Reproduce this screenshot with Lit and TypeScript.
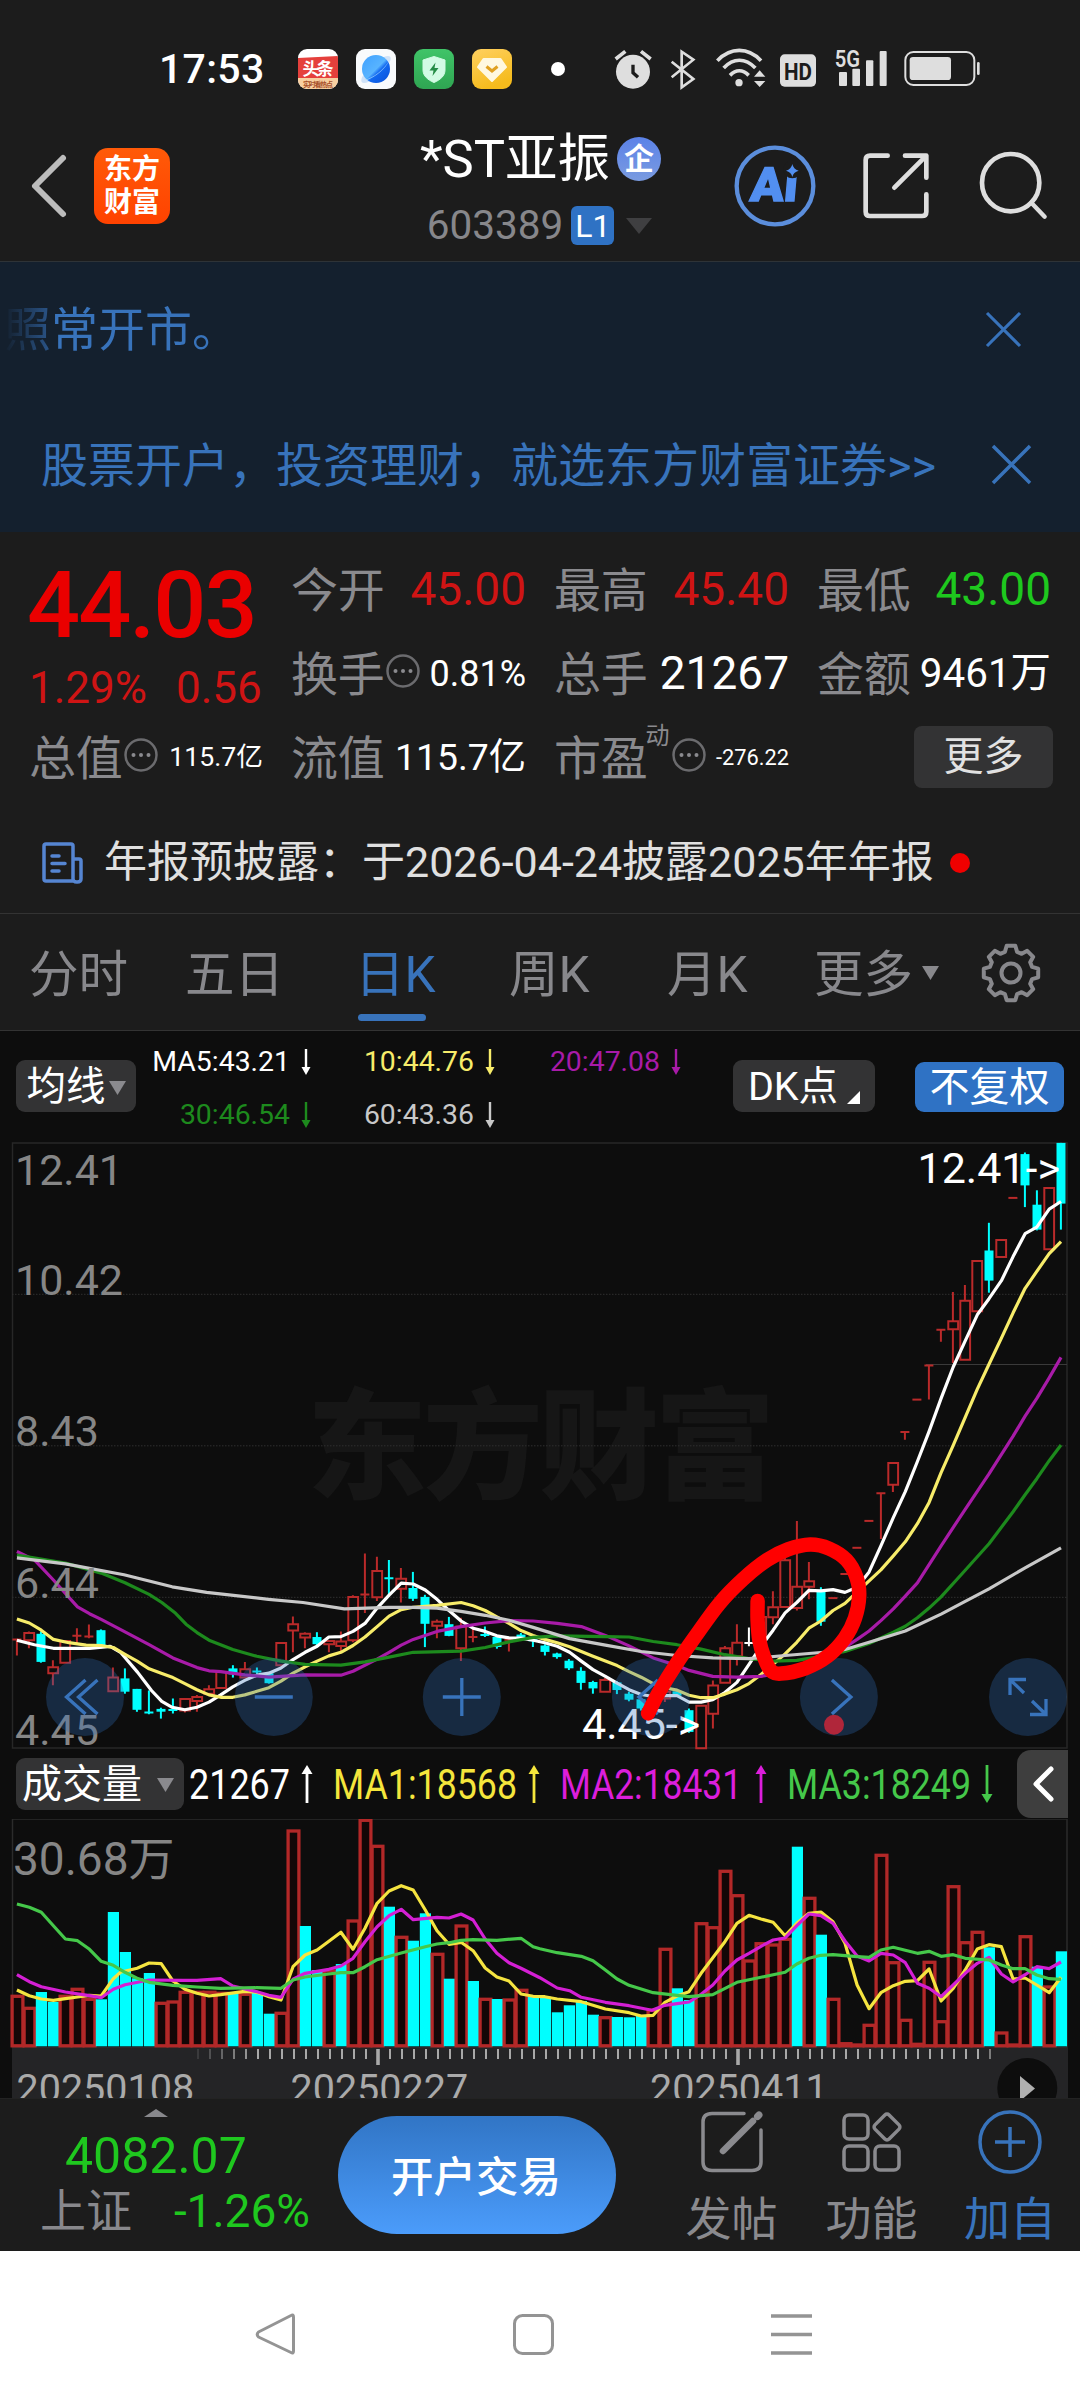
import { LitElement, html, svg, css } from "lit";
import { customElement } from "lit/decorators.js";

type Pt = [number, number];
/** [kind, high, bodyTop, bodyBottom, low] in plot units */
type Candle = [string, number, number, number, number];

/* Plot units per pixel of the price chart. */
const UX = 2.904;
const UY = 2.489;
const STEP = 12;
const FIRST = 16.9;

const CANDLES: Candle[] = [
  ["r", 1266, 1266, 1270, 1308], ["r", 1248, 1252, 1270, 1290], ["c", 1248, 1254, 1324, 1326],
  ["r", 1320, 1337, 1352, 1382], ["r", 1272, 1272, 1326, 1326], ["r", 1240, 1258, 1260, 1278],
  ["r", 1231, 1258, 1263, 1265], ["c", 1243, 1245, 1285, 1290], ["r", 1338, 1363, 1397, 1397],
  ["c", 1340, 1365, 1398, 1403], ["c", 1391, 1391, 1443, 1448], ["c", 1395, 1447, 1453, 1454],
  ["c", 1438, 1441, 1448, 1465], ["c", 1415, 1441, 1446, 1452], ["r", 1416, 1416, 1445, 1450],
  ["r", 1406, 1411, 1421, 1448], ["r", 1382, 1392, 1403, 1406], ["r", 1349, 1349, 1389, 1389],
  ["c", 1332, 1340, 1355, 1363], ["r", 1324, 1342, 1363, 1364], ["c", 1338, 1346, 1350, 1356],
  ["c", 1350, 1352, 1377, 1378], ["r", 1277, 1277, 1332, 1332], ["r", 1211, 1230, 1246, 1300],
  ["r", 1250, 1254, 1263, 1290], ["c", 1250, 1262, 1280, 1284], ["r", 1270, 1272, 1280, 1300],
  ["r", 1248, 1273, 1284, 1302], ["r", 1158, 1162, 1270, 1275], ["r", 1054, 1154, 1158, 1202],
  ["r", 1062, 1098, 1163, 1172], ["c", 1070, 1113, 1118, 1160], ["r", 1090, 1117, 1142, 1176],
  ["c", 1100, 1140, 1167, 1172], ["c", 1157, 1162, 1229, 1287], ["r", 1218, 1224, 1234, 1265],
  ["c", 1212, 1230, 1259, 1260], ["r", 1214, 1236, 1290, 1322], ["r", 1240, 1259, 1265, 1275],
  ["c", 1236, 1254, 1260, 1262], ["c", 1262, 1262, 1287, 1291], ["r", 1268, 1268, 1270, 1298],
  ["c", 1252, 1256, 1264, 1266], ["c", 1266, 1267, 1273, 1287], ["c", 1280, 1283, 1299, 1308],
  ["c", 1301, 1303, 1312, 1316], ["c", 1317, 1321, 1340, 1344], ["c", 1337, 1346, 1376, 1393],
  ["c", 1371, 1374, 1390, 1403], ["r", 1364, 1369, 1398, 1398], ["c", 1372, 1375, 1394, 1404],
  ["c", 1398, 1403, 1418, 1422], ["c", 1415, 1417, 1440, 1445], ["c", 1420, 1427, 1440, 1442],
  ["r", 1390, 1398, 1415, 1424], ["c", 1394, 1397, 1408, 1410], ["c", 1440, 1444, 1498, 1500],
  ["r", 1432, 1433, 1539, 1539], ["r", 1370, 1383, 1453, 1490], ["r", 1284, 1290, 1376, 1378],
  ["r", 1230, 1276, 1310, 1333], ["w", 1238, 1275, 1279, 1285], ["r", 1205, 1212, 1265, 1268],
  ["r", 1148, 1188, 1213, 1230], ["r", 1064, 1071, 1187, 1190], ["r", 973, 1137, 1190, 1196],
  ["r", 1075, 1123, 1137, 1168], ["c", 1138, 1146, 1224, 1234], ["r", 1165, 1164, 1166, 1165],
  ["r", 1105, 1104, 1106, 1105], ["r", 1040, 1039, 1041, 1040], ["r", 973, 972, 974, 973],
  ["r", 904, 903, 905, 1018], ["r", 829, 829, 883, 901], ["r", 752, 751, 753, 771],
  ["r", 671, 670, 672, 671], ["r", 585, 585, 587, 671], ["r", 497, 496, 498, 527],
  ["r", 403, 476, 496, 580], ["r", 386, 425, 572, 572], ["r", 326, 326, 451, 451],
  ["c", 231, 300, 375, 405], ["r", 274, 274, 316, 316], ["r", 169, 168, 170, 169],
  ["c", 56, 60, 138, 192], ["c", 150, 186, 248, 250], ["r", 144, 144, 297, 297],
  ["c", 32, 32, 183, 248],
];

const MA5: Pt[] = [[49,1270],[100,1281],[155,1290],[260,1290],[320,1285],[350,1300],[400,1350],[440,1395],[470,1422],[500,1437],[537,1443],[572,1437],[607,1424],[641,1406],[676,1386],[711,1370],[746,1357],[781,1352],[816,1339],[851,1318],[886,1300],[921,1285],[955,1262],[990,1261],[1025,1248],[1060,1228],[1095,1190],[1130,1158],[1165,1128],[1200,1130],[1235,1145],[1269,1168],[1304,1196],[1339,1222],[1374,1240],[1409,1248],[1443,1259],[1478,1264],[1513,1265],[1548,1270],[1582,1276],[1618,1285],[1654,1300],[1688,1322],[1722,1343],[1758,1360],[1792,1377],[1827,1393],[1862,1405],[1897,1410],[1931,1408],[1966,1408],[2001,1424],[2036,1424],[2070,1418],[2105,1400],[2140,1375],[2175,1330],[2210,1285],[2245,1245],[2280,1202],[2314,1176],[2349,1146],[2384,1147],[2419,1144],[2454,1151],[2489,1138],[2524,1100],[2558,1035],[2594,965],[2629,900],[2664,825],[2698,750],[2733,668],[2768,590],[2803,525],[2838,460],[2872,420],[2908,375],[2942,315],[2977,258],[3011,242],[3047,197],[3081,178]];
const MA10: Pt[] = [[49,1217],[85,1227],[120,1245],[155,1268],[200,1276],[250,1282],[294,1283],[329,1288],[363,1305],[398,1322],[433,1341],[468,1352],[502,1363],[537,1378],[572,1393],[607,1406],[641,1412],[676,1412],[711,1406],[746,1397],[781,1388],[816,1372],[851,1352],[886,1336],[921,1322],[955,1309],[990,1300],[1025,1283],[1060,1262],[1095,1236],[1130,1210],[1165,1194],[1200,1188],[1269,1183],[1339,1176],[1374,1184],[1409,1196],[1443,1212],[1478,1228],[1513,1246],[1548,1258],[1582,1268],[1618,1276],[1654,1286],[1688,1298],[1722,1310],[1758,1322],[1792,1333],[1827,1348],[1862,1362],[1897,1378],[1931,1388],[1966,1394],[2001,1407],[2036,1413],[2070,1413],[2105,1404],[2140,1393],[2175,1378],[2210,1355],[2245,1330],[2280,1304],[2314,1275],[2349,1240],[2384,1222],[2419,1196],[2454,1178],[2489,1150],[2524,1122],[2558,1095],[2594,1060],[2629,1025],[2664,980],[2698,927],[2733,853],[2768,785],[2803,715],[2838,645],[2872,583],[2908,518],[2942,455],[2977,394],[3011,352],[3047,308],[3081,278]];
const MA20: Pt[] = [[49,1049],[100,1070],[155,1120],[225,1187],[260,1204],[294,1218],[363,1249],[433,1281],[502,1314],[572,1338],[607,1346],[641,1348],[711,1356],[781,1362],[851,1358],[886,1356],[990,1357],[1025,1347],[1095,1317],[1130,1300],[1165,1282],[1200,1268],[1269,1248],[1339,1236],[1409,1227],[1478,1221],[1548,1222],[1618,1228],[1688,1236],[1758,1258],[1827,1284],[1897,1314],[1966,1333],[2001,1345],[2070,1360],[2140,1362],[2210,1360],[2280,1350],[2349,1332],[2419,1305],[2458,1285],[2489,1268],[2524,1247],[2558,1221],[2594,1192],[2629,1160],[2664,1127],[2733,1035],[2803,944],[2872,856],[2942,762],[2977,712],[3011,668],[3047,617],[3081,566]];
const MA30: Pt[] = [[49,1058],[190,1078],[260,1095],[294,1103],[363,1127],[433,1156],[470,1176],[510,1203],[540,1230],[572,1251],[607,1270],[676,1293],[746,1310],[816,1322],[886,1330],[990,1332],[1060,1324],[1130,1312],[1200,1300],[1339,1297],[1409,1288],[1478,1274],[1548,1263],[1618,1259],[1758,1261],[1827,1262],[1897,1273],[1966,1281],[2036,1292],[2105,1306],[2175,1316],[2245,1322],[2314,1320],[2384,1310],[2454,1298],[2524,1278],[2594,1250],[2629,1235],[2664,1214],[2698,1190],[2733,1162],[2803,1096],[2872,1030],[2942,950],[2977,908],[3011,868],[3047,823],[3081,784]];
const MA60: Pt[] = [[49,1065],[190,1080],[360,1107],[500,1137],[600,1151],[780,1168],[880,1176],[1000,1192],[1130,1188],[1200,1188],[1269,1190],[1339,1198],[1409,1208],[1478,1220],[1548,1238],[1654,1266],[1758,1282],[1862,1298],[1966,1308],[2070,1314],[2175,1316],[2280,1308],[2349,1303],[2419,1298],[2454,1293],[2524,1275],[2629,1247],[2733,1205],[2803,1173],[2872,1142],[2977,1090],[3081,1040]];
const PEN: Pt[] = [[1882,1452],[1913,1400],[1963,1330],[2018,1262],[2088,1180],[2158,1118],[2228,1070],[2288,1044],[2353,1032],[2408,1042],[2458,1070],[2488,1115],[2495,1160],[2483,1215],[2453,1265],[2403,1310],[2338,1340],[2268,1353],[2238,1345],[2218,1310],[2205,1270],[2200,1220],[2200,1172]];

/* Volume bars: kind and top edge, three units to a pixel. */
const VOLUME =
  "r766 r802 c756 c786 r766 r745 r775 c778 c516 c636 c715 c699 r787 r783 r754 r754 r754 r757 c760 r760 c758 c821 r817 r270 c558 c690 r690 c672 r540 r238 r316 c500 r589 c602 c520 r640 c716 r555 c723 r775 c777 r777 r748 c770 c770 c817 c796 c783 c824 r830 c831 c832 c828 r808 r625 c745 c780 r548 r560 r391 r464 r660 r608 r612 r595 c320 r472 c584 r775 r908 r912 r853 r343 r665 r838 r910 r664 r842 r437 r605 r574 c622 r876 r912 r587 c680 r738 c634"
    .split(" ")
    .map((s) => ({ kind: s[0], top: Number(s.slice(1)) / 3 }));
const VMA1: Pt[] = [[49,750],[85,767],[120,777],[155,781],[190,776],[225,771],[260,766],[294,768],[329,716],[350,697],[398,685],[433,669],[468,671],[502,723],[537,748],[572,760],[607,768],[641,764],[711,754],[746,757],[781,770],[816,780],[851,680],[886,645],[921,630],[955,604],[990,577],[1025,628],[1060,565],[1095,490],[1130,453],[1165,437],[1200,450],[1235,510],[1269,572],[1304,613],[1339,607],[1374,632],[1409,684],[1443,711],[1478,723],[1513,762],[1548,769],[1582,770],[1618,777],[1688,785],[1758,807],[1827,818],[1862,828],[1897,826],[1931,787],[1966,768],[2001,755],[2036,700],[2105,605],[2140,550],[2175,526],[2210,537],[2245,547],[2280,587],[2314,550],[2349,520],[2384,516],[2419,545],[2454,610],[2489,735],[2524,806],[2558,758],[2594,737],[2629,724],[2664,722],[2698,687],[2733,783],[2768,745],[2803,690],[2838,627],[2872,614],[2908,620],[2942,717],[2977,714],[3011,735],[3047,758],[3081,712]];
const VMA2: Pt[] = [[49,704],[85,725],[120,740],[190,756],[260,767],[294,773],[329,748],[363,734],[433,720],[530,721],[572,721],[641,716],[676,738],[746,755],[781,766],[816,772],[851,718],[886,700],[955,688],[990,678],[1025,655],[1060,605],[1095,560],[1130,527],[1165,508],[1200,539],[1269,532],[1304,534],[1339,522],[1374,540],[1409,597],[1443,640],[1478,668],[1513,685],[1568,713],[1618,744],[1654,752],[1688,772],[1758,787],[1827,797],[1893,811],[1931,796],[1966,791],[2001,786],[2036,763],[2070,735],[2105,693],[2140,660],[2175,640],[2210,619],[2245,600],[2280,594],[2314,557],[2349,522],[2384,527],[2419,550],[2454,603],[2489,648],[2524,663],[2558,640],[2594,645],[2629,668],[2664,730],[2698,745],[2733,770],[2768,735],[2803,700],[2838,670],[2872,652],[2908,702],[2942,726],[2977,704],[3011,680],[3047,686],[3081,666]];
const VMA3: Pt[] = [[49,492],[85,502],[120,517],[155,557],[190,597],[225,602],[260,628],[294,664],[329,676],[363,697],[398,715],[433,727],[502,736],[572,741],[641,745],[746,743],[816,745],[851,720],[886,711],[955,702],[990,698],[1025,698],[1060,680],[1095,659],[1165,639],[1235,620],[1269,612],[1304,608],[1339,601],[1374,599],[1443,601],[1513,595],[1548,620],[1568,626],[1618,638],[1688,649],[1722,662],[1758,690],[1792,717],[1827,736],[1897,758],[1966,766],[2001,770],[2070,764],[2140,727],[2210,712],[2280,697],[2314,672],[2349,655],[2384,646],[2419,644],[2489,650],[2524,652],[2558,630],[2594,622],[2629,631],[2664,640],[2698,634],[2733,649],[2768,644],[2803,655],[2872,660],[2908,675],[2942,686],[2977,686],[3011,705],[3047,716],[3081,718]];

const n1 = (v: number) => v.toFixed(1);
const line = (pts: Pt[], uy: number) => pts.map(([x, y]) => `${n1(x / UX)},${n1(y / uy)}`).join(" ");

/** Catmull-Rom spline through the points, as a path. */
function smooth(pts: Pt[]): string {
  const p = pts.map(([x, y]) => [x / UX, y / UY] as Pt);
  let d = `M${n1(p[0][0])} ${n1(p[0][1])}`;
  for (let i = 0; i < p.length - 1; i++) {
    const a = p[Math.max(0, i - 1)], b = p[i], c = p[i + 1], e = p[Math.min(p.length - 1, i + 2)];
    d += `C${n1(b[0] + (c[0] - a[0]) / 6)} ${n1(b[1] + (c[1] - a[1]) / 6)} ${n1(c[0] - (e[0] - b[0]) / 6)} ${n1(c[1] - (e[1] - b[1]) / 6)} ${n1(c[0])} ${n1(c[1])}`;
  }
  return d;
}

const base = css`
  :host { display: block; }
  * { box-sizing: border-box; }
  svg { display: block; flex: none; overflow: visible; }
  span { white-space: nowrap; }
  text { font-family: Roboto, "Noto Sans CJK SC", sans-serif; }
`;

@customElement("status-bar")
class StatusBar extends LitElement {
  static styles = [base, css`
    .bar { display: flex; align-items: flex-start; height: 110px; padding: 36px 0 0 159px; color: #fff; }
    .time { font-size: 41px; font-weight: 500; line-height: 67px; width: 139px; letter-spacing: 0.3px; }
    .apps { display: flex; gap: 18px; padding-top: 13px; }
    .dot { width: 14px; height: 14px; border-radius: 50%; background: #fff; margin: 26px 35px 0 39px; }
  `];
  render() {
    return html`<div class="bar">
      <span class="time">17:53</span>
      <div class="apps">
        <svg width="40" height="40" viewBox="0 0 40 40">
          <defs><clipPath id="r"><rect width="40" height="40" rx="9" /></clipPath></defs>
          <g clip-path="url(#r)">
            <rect width="40" height="40" fill="#fff" />
            <path d="M0 9L40 7V29H0Z" fill="#e5403c" />
            <path d="M0 29H40V40H0Z" fill="#f8cfa0" />
            <text x="20" y="26" font-size="17" font-weight="700" fill="#fff" text-anchor="middle" textLength="31">头条</text>
            <text x="20" y="38.2" font-size="7" font-weight="700" fill="#a8502a" text-anchor="middle" textLength="30">实时看热点</text>
          </g>
        </svg>
        <svg width="40" height="40" viewBox="0 0 40 40">
          <defs><linearGradient id="b" x1="0" y1="0" x2="1" y2="1"><stop offset="0" stop-color="#3fa0ff" /><stop offset=".5" stop-color="#58b4ff" /><stop offset=".6" stop-color="#1268f0" /><stop offset="1" stop-color="#0a50d8" /></linearGradient></defs>
          <rect width="40" height="40" rx="9" fill="#f8fafc" />
          <ellipse cx="20" cy="20.5" rx="19" ry="6" transform="rotate(-42 20 20.500)" fill="#cfe2f8" />
          <circle cx="20" cy="20" r="14" fill="url(#b)" />
          <path d="M8 31C18 29 28 20 33 12C30 19 20 28 11 31Z" fill="#a8dcff" opacity=".8" />
        </svg>
        <svg width="40" height="40" viewBox="0 0 40 40">
          <defs><linearGradient id="g" x1="0" y1="0" x2="0" y2="1"><stop offset="0" stop-color="#40c468" /><stop offset="1" stop-color="#2fa552" /></linearGradient></defs>
          <rect width="40" height="40" rx="9" fill="url(#g)" />
          <path d="M20 7.500L31 11V21C31 27 26 31 20 33.500C14 31 9 27 9 21V11Z" fill="#d2fbe4" stroke="#d2fbe4" stroke-linejoin="round" />
          <path d="M21.500 13.500L15.500 21.500H19.500L18.500 27L24.500 19H20.500Z" fill="#258c46" />
        </svg>
        <svg width="40" height="40" viewBox="0 0 40 40">
          <defs><linearGradient id="y" x1="0" y1="0" x2=".4" y2="1"><stop offset="0" stop-color="#ffd060" /><stop offset="1" stop-color="#f5bb1c" /></linearGradient></defs>
          <rect width="40" height="40" rx="9" fill="url(#y)" />
          <path d="M11.500 10H28.500L34 18L20 32L6 18Z" fill="#fff8e0" stroke="#fff8e0" stroke-width="2" stroke-linejoin="round" />
          <path d="M14.500 17.500L20 22L25.500 17.500" fill="none" stroke="#e0a020" stroke-width="3" />
        </svg>
      </div>
      <div class="dot"></div>
      <svg width="400" height="66" viewBox="0 0 1200 198" fill="#dedede">
        <circle cx="99" cy="107" r="51" />
        <path d="M47 69L76 46M152 69L123 46" stroke="#dedede" stroke-width="11" />
        <path d="M99 86V110L114 124" fill="none" stroke="#1c1c1c" stroke-width="10" />
        <path d="M215 77L280 129L245 154V47L280 71L215 124" fill="none" stroke="#dedede" stroke-width="8" />
        <path d="M352 74C392 33 444 33 483 74M371 96C400 65 436 65 466 96M390 118C408 100 428 100 446 118" fill="none" stroke="#dedede" stroke-width="11" />
        <circle cx="417" cy="140" r="11" />
        <rect x="455" y="108" width="50" height="50" fill="#1c1c1c" />
        <path d="M462 122L479 103L496 122ZM462 135L479 153L496 135Z" />
        <rect x="540" y="55" width="108" height="97" rx="14" />
        <text x="594" y="131" font-size="73" font-weight="700" fill="#1c1c1c" text-anchor="middle" textLength="84" lengthAdjust="spacingAndGlyphs">HD</text>
        <text x="742" y="93" font-size="72" font-weight="600" text-anchor="middle" textLength="76" lengthAdjust="spacingAndGlyphs">5G</text>
        <rect x="717" y="108" width="24" height="42" rx="3" /><rect x="757" y="98" width="23" height="52" rx="3" />
        <rect x="798" y="73" width="22" height="77" rx="3" /><rect x="839" y="45" width="21" height="105" rx="3" />
        <rect x="916" y="48" width="207" height="99" rx="24" fill="none" stroke="#dedede" stroke-width="6" />
        <rect x="929" y="63" width="124" height="69" rx="10" />
        <rect x="1131" y="78" width="8" height="39" rx="4" />
      </svg>
    </div>`;
  }
}

@customElement("stock-header")
class StockHeader extends LitElement {
  static styles = [base, css`
    .bar { display: flex; height: 152px; border-bottom: 1px solid #2e3337; padding-left: 30px; }
    .back { margin-top: 43px; }
    .logo { flex: none; width: 76px; height: 76px; margin: 38px 0 0 26px; border-radius: 14px; background: linear-gradient(#ff5a08, #ff4200); color: #fff; font-size: 28px; font-weight: 700; line-height: 33px; padding-top: 5px; text-align: center; display: flex; flex-direction: column; }
    .mid { flex: none; width: 560px; display: flex; flex-direction: column; align-items: center; padding: 20px 0 0 181px; }
    .name { display: flex; align-items: center; height: 60px; font-size: 52.500px; color: #fff; }
    .badge { width: 44px; height: 44px; border-radius: 50%; background: linear-gradient(#5b82e8, #7a9be0); font-size: 30px; font-weight: 700; line-height: 43px; text-align: center; margin: -2px 0 0 7px; }
    .code { display: flex; align-items: center; height: 39px; margin: 16px 2px 0 0; font-size: 40.500px; color: #87878b; }
    .level { width: 43px; height: 39px; border-radius: 6px; background: #2f72c4; color: #fff; font-size: 32px; line-height: 40px; text-align: center; margin: 0 12px 0 8px; }
    .tools { margin: 20px 0 0 -10px; }
  `];
  render() {
    return html`<div class="bar">
      <svg class="back" width="38" height="66" viewBox="0 0 38 66"><path d="M33 5L5 33L33 61" fill="none" stroke="#bcbcbc" stroke-width="6" stroke-linecap="round" stroke-linejoin="round" /></svg>
      <div class="logo"><span>东方</span><span>财富</span></div>
      <div class="mid">
        <div class="name"><span>*ST亚振</span><span class="badge">企</span></div>
        <div class="code"><span>603389</span><span class="level">L1</span>
          <svg width="26" height="16" viewBox="0 0 26 16"><path d="M0 0H26L13 16Z" fill="#3f3f41" /></svg></div>
      </div>
      <svg class="tools" width="350" height="110" viewBox="0 0 1050 330">
        <circle cx="165" cy="168" r="115" fill="none" stroke="#5b8edc" stroke-width="13" />
        <text transform="translate(88 213) skewX(-5)" font-size="142" font-weight="900" fill="#528ff0" stroke="#528ff0" stroke-width="4" textLength="142" lengthAdjust="spacingAndGlyphs">Ai</text>
        <circle cx="217" cy="118" r="27" fill="#1c1c1c" />
        <path d="M217 102Q220 118 236 122Q220 126 217 141Q214 126 198 122Q214 118 217 102Z" fill="#528ff0" />
        <path d="M503 77H450Q437 77 437 90V245Q437 258 450 258H606Q619 258 619 245V193M555 77H619V143M619 77L523 173" fill="none" stroke="#dedede" stroke-width="14" stroke-linecap="round" stroke-linejoin="round" />
        <circle cx="872" cy="158" r="86" fill="none" stroke="#dedede" stroke-width="14" />
        <path d="M934 218L974 260" stroke="#dedede" stroke-width="13" stroke-linecap="round" />
      </svg>
    </div>`;
  }
}

@customElement("notice-panel")
class NoticePanel extends LitElement {
  static styles = [base, css`
    .panel { height: 270px; background: #14202e; color: #3873bb; font-size: 47px; }
    .row { display: flex; justify-content: space-between; align-items: center; }
    .scroll { height: 135px; padding: 0 60px 0 4px; }
    .scroll span { background: linear-gradient(90deg, #14202e, #2a5488 46px, #3873bb 50px); -webkit-background-clip: text; color: transparent; }
    .ad { height: 135px; padding: 0 50px 0 41px; }
    .ad span { margin-top: 2px; }
  `];
  render() {
    const cross = (s: number, w: number) => html`<svg width="${s}" height="${s}" viewBox="0 0 34 34"><path d="M0 0L34 34M34 0L0 34" stroke="#3873bb" stroke-width="${w}" /></svg>`;
    return html`<div class="panel">
      <div class="row scroll"><span>照常开市。</span>${cross(33, 3.2)}</div>
      <div class="row ad"><span>股票开户，投资理财，就选东方财富证券&gt;&gt;</span>${cross(37, 3.2)}</div>
    </div>`;
  }
}

@customElement("quote-panel")
class QuotePanel extends LitElement {
  static styles = [base, css`
    .grid { display: grid; grid-template-columns: 234px 235px 235px 234px; grid-auto-rows: 84px; column-gap: 28px; padding: 16px 0 0 29px; }
    .price { grid-row: span 2; color: #ea0000; }
    .last { display: block; font-size: 93.500px; font-weight: 500; line-height: 114px; letter-spacing: -2px; margin-left: -2px; }
    .chg { display: flex; gap: 29px; font-size: 44px; line-height: 53px; color: #cf1414; }
    .cell { display: flex; align-items: center; justify-content: space-between; }
    .label { display: flex; align-items: center; font-size: 47px; color: #8a8a8e; letter-spacing: -0.2px; }
    .label svg { margin: -5px 0 0 1px; }
    .sup { font-size: 24px; margin: -44px 2px 0 -2px; }
    .up { color: #cf1414; } .down { color: #1ec81e; } .plain { color: #fff; }
    .s46 { font-size: 46px; } .s40 { font-size: 40.400px; } .s37 { font-size: 37.300px; } .s36 { font-size: 36px; } .s27 { font-size: 26.7px; } .s22 { font-size: 21.800px; }
    .more { margin: -2px -3px 0 97px; width: 139px; height: 62px; border-radius: 8px; background: #333334; color: #e2e2e2; font-size: 40px; line-height: 62px; text-align: center; }
    .news { display: flex; align-items: center; height: 114px; padding: 12px 0 0 42px; border-bottom: 1px solid #333; font-size: 43px; color: #e0e0e0; }
    .news span { margin: 0 16px 0 21px; }
    .news i { width: 20px; height: 20px; border-radius: 50%; background: #f00000; }
  `];
  render() {
    const info = html`<svg width="34" height="34" viewBox="0 0 34 34"><circle cx="17" cy="17" r="15.500" fill="none" stroke="#6b6b6e" stroke-width="2.500" /><g fill="#8a8a8e"><circle cx="9.500" cy="17" r="2" /><circle cx="17" cy="17" r="2" /><circle cx="24.500" cy="17" r="2" /></g></svg>`;
    const cell = (label: string, value: string, cls: string, extra: unknown = "") => html`<div class="cell"><span class="label">${label}${extra}</span><span class="${cls}">${value}</span></div>`;
    return html`<div class="grid">
        <div class="price"><span class="last">44.03</span><div class="chg"><span>1.29%</span><span>0.56</span></div></div>
        ${cell("今开", "45.00", "up s46")} ${cell("最高", "45.40", "up s46")} ${cell("最低", "43.00", "down s46")}
        ${cell("换手", "0.81%", "plain s36", info)} ${cell("总手", "21267", "plain s46")} ${cell("金额", "9461万", "plain s40")}
        ${cell("总值", "115.7亿", "plain s27", info)} ${cell("流值", "115.7亿", "plain s37")}
        ${cell("市盈", "-276.22", "plain s22", html`<span class="sup">动</span>${info}`)}
        <div class="cell"><span class="more">更多</span></div>
      </div>
      <div class="news">
        <svg width="41" height="42" viewBox="0 0 41 42" fill="none" stroke="#5585d2" stroke-width="3.500" stroke-linejoin="round" stroke-linecap="round">
          <path d="M31 39H4Q2 39 2 37V4Q2 2 4 2H29Q31 2 31 4V37Q31 40 35 40Q39 40 39 37V19Q39 17 37 17H31" /><path d="M10 14H17M10 21.500H23M10 29H17" />
        </svg>
        <span>年报预披露：于2026-04-24披露2025年年报</span><i></i>
      </div>`;
  }
}

@customElement("period-tabs")
class PeriodTabs extends LitElement {
  static styles = [base, css`
    .tabs { display: grid; grid-template-columns: 156px 170px 154px 158px 147px 168px auto; height: 117px; padding-left: 29px; border-bottom: 1px solid #333; font-size: 49.500px; line-height: 122px; color: #88888c; }
    .tab { display: flex; align-items: center; }
    .active { flex-direction: column; align-items: flex-start; color: #3873bb; }
    .active i { width: 68px; height: 7px; border-radius: 4px; background: #3873bb; margin: -22px 0 0 3px; }
    .caret { margin: -5px 0 0 9px; }
    .gear { margin: -5px 0 0 -1px; }
  `];
  render() {
    const teeth: string[] = [];
    for (let k = 0; k < 8; k++) {
      const c = k * 45 - 90;
      for (const [off, rad] of [[-16, 22], [-9, 27.5], [9, 27.5], [16, 22]]) {
        const t = ((c + off) * Math.PI) / 180;
        teeth.push(`${n1(30 + rad * Math.cos(t))},${n1(30 + rad * Math.sin(t))}`);
      }
    }
    return html`<div class="tabs">
      <span class="tab">分时</span><span class="tab">五日</span><span class="tab active">日K<i></i></span><span class="tab">周K</span><span class="tab">月K</span>
      <span class="tab">更多<svg class="caret" width="17" height="14" viewBox="0 0 17 14"><path d="M0 0H17L8.500 14Z" fill="#88888c" /></svg></span>
      <span class="tab"><svg class="gear" width="60" height="60" viewBox="0 0 60 60" fill="none" stroke="#88888c" stroke-width="4"><polygon points="${teeth.join(" ")}" stroke-linejoin="round" /><circle cx="30" cy="30" r="9.500" /></svg></span>
    </div>`;
  }
}

const arrow = (up: boolean, h: number, w: number) => html`<svg width="12" height="${h}" viewBox="0 0 12 ${h}"><g transform="${up ? "" : `translate(0 ${h}) scale(1 -1)`}"><path d="M6 4V${h}" stroke="currentColor" stroke-width="${w}" /><path d="M1.500 8L6 0L10.500 8Z" fill="currentColor" /></g></svg>`;

@customElement("price-chart")
class PriceChart extends LitElement {
  static styles = [base, css`
    .tools { display: flex; align-items: flex-start; height: 99px; padding: 29px 16px 0; }
    .btn { flex: none; display: flex; align-items: center; justify-content: center; height: 52px; border-radius: 9px; background: #333334; color: #fff; font-size: 39.500px; }
    .avg { width: 120px; gap: 3px; padding-top: 3px; }
    .dk { width: 142px; margin-left: auto; gap: 9px; padding-top: 3px; }
    .dk svg { margin-top: 19px; }
    .fq { width: 149px; margin-left: 40px; height: 50px; margin-top: 2px; padding-top: 3px; font-size: 40px; background: #2f72c4; }
    .mas { flex: none; display: grid; grid-template-columns: 154px 184px 186px; row-gap: 20px; margin: -15px 0 0 22px; font-size: 28.400px; line-height: 33px; }
    .ma { display: flex; justify-content: flex-end; align-items: center; gap: 10px; }
    .first { margin-left: -20px; }
    .w { color: #fff; } .y { color: #f7ec6a; } .m { color: #a81ba8; } .g { color: #1d8a1d; } .s { color: #c8c8c8; }
  `];
  private candle([kind, hi, top, bot, lo]: Candle, i: number) {
    const x = FIRST + i * STEP;
    const t = top / UY, b = bot / UY;
    const color = kind === "r" ? "#ba2a2a" : kind === "c" ? "#00ffff" : "#ffffff";
    if (b - t < 2.6) {
      return svg`<path d="M${n1(x - 4.5)} ${n1((t + b) / 2)}h9M${n1(x)} ${n1(hi / UY)}V${n1(lo / UY)}" stroke="${color}" stroke-width="2"/>`;
    }
    if (kind === "r") {
      return svg`<path d="M${n1(x)} ${n1(hi / UY)}V${n1(t)}M${n1(x)} ${n1(b)}V${n1(lo / UY)}M${n1(x - 4.6)} ${n1(t)}h9.800V${n1(b)}h-9.800Z" fill="none" stroke="${color}" stroke-width="2"/>`;
    }
    return svg`<path d="M${n1(x)} ${n1(hi / UY)}V${n1(lo / UY)}" stroke="${color}" stroke-width="2"/><rect x="${n1(x - 4.4)}" y="${n1(t)}" width="9" height="${n1(b - t)}" fill="${color}"/>`;
  }
  render() {
    const grid = [164.3, 315.8, 467.3];
    const labels: [string, number][] = [["12.41", 55], ["10.42", 164.5], ["8.43", 315.5], ["6.44", 467.5], ["4.45", 614.5]];
    const buttons: [number, string][] = [
      [85, "M0.500 -17L-18.500 0L0.500 17M12.500 -17L-6.500 0L12.500 17"],
      [273.8, "M-19 0H19"],
      [461.8, "M-19 0H19M0 -19V19"],
      [650.9, "M7 -17L-12 0L7 17"],
      [838.9, "M-7 -17L12 0L-7 17"],
      [1028, "M-2 -17.500H-18V-2M-18 -17.500L-4 -4M2 17.500H18V2M18 17.500L4 4"],
    ];
    return html`<div class="tools">
        <span class="btn avg">均线<svg width="17" height="14" viewBox="0 0 17 14"><path d="M0 0H17L8.500 14Z" fill="#8a8a8e" /></svg></span>
        <div class="mas">
          <span class="ma w first">MA5:43.21${arrow(false, 26, 2.4)}</span><span class="ma y">10:44.76${arrow(false, 26, 2.4)}</span><span class="ma m">20:47.08${arrow(false, 26, 2.4)}</span>
          <span class="ma g">30:46.54${arrow(false, 26, 2.4)}</span><span class="ma s">60:43.36${arrow(false, 26, 2.4)}</span>
        </div>
        <span class="btn dk">DK点<svg width="13" height="13" viewBox="0 0 13 13"><path d="M13 0V13H0Z" fill="#fff" /></svg></span>
        <span class="btn fq">不复权</span>
      </div>
      <svg width="1080" height="628" viewBox="0 0 1080 628">
        <rect x="12.500" y="13" width="1054.500" height="605" fill="none" stroke="#272727" stroke-width="1.500" />
        <text x="307" y="360" font-size="120" font-weight="900" fill="#161616" textLength="468">东方财富</text>
        ${grid.map((y) => svg`<path d="M12 ${y}H1067" stroke="#303030" stroke-width="1" stroke-dasharray="1.500 1.500"/>`)}
        <path d="M926 234.500H1067" stroke="#3a3a3a" stroke-width="1" />
        ${CANDLES.map((c, i) => this.candle(c, i))}
        <g fill="none" stroke-width="3.200" stroke-linejoin="round">
          <polyline points="${line(MA5, UY)}" stroke="#fff" />
          <polyline points="${line(MA10, UY)}" stroke="#f7ec6a" />
          <polyline points="${line(MA20, UY)}" stroke="#a81ba8" />
          <polyline points="${line(MA30, UY)}" stroke="#1d8a1d" />
          <polyline points="${line(MA60, UY)}" stroke="#c8c8c8" />
        </g>
        ${labels.map(([t, y]) => svg`<text x="15" y="${y}" font-size="43" fill="#868686">${t}</text>`)}
        <text x="917.500" y="53" font-size="43" fill="#fff">12.41-&gt;</text>
        <text x="582" y="609" font-size="43" fill="#fff">4.45-&gt;</text>
        ${buttons.map(([x, d]) => svg`<g transform="translate(${x} 567)"><circle r="39" fill="#2f6eb9" opacity=".3"/><path d="${d}" fill="none" stroke="#3873bb" stroke-width="3.300"/></g>`)}
        <circle cx="834" cy="594.700" r="10" fill="#b0263a" />
        <path d="${smooth(PEN)}" fill="none" stroke="#ff0000" stroke-width="14.500" stroke-linecap="round" stroke-linejoin="round" />
      </svg>`;
  }
}

@customElement("volume-chart")
class VolumeChart extends LitElement {
  static styles = [base, css`
    .head { display: flex; height: 61px; padding-left: 16px; }
    .pill { flex: none; display: flex; align-items: center; justify-content: space-between; width: 168px; height: 52px; padding: 2px 10px 0 6px; border-radius: 9px; background: #333334; color: #fff; font-size: 40px; }
    .fold { margin: -8px 12px 0 auto; width: 51px; height: 68px; border-radius: 14px 0 0 14px; background: #3e3e3e; display: flex; align-items: center; justify-content: center; }
    .plot { height: 279px; overflow: hidden; }
  `];
  render() {
    const legend: [string, number, number, string, number, boolean][] = [
      ["21267", 189, 101, "#fff", 307, true],
      ["MA1:18568", 333, 184, "#f5e63c", 534, true],
      ["MA2:18431", 560, 182, "#dc1edc", 761, true],
      ["MA3:18249", 787, 184, "#45c84a", 987, false],
    ];
    const ticks = Array.from({ length: 67 }, (_, k) => 198 + 12 * k);
    return html`<div class="head">
        <span class="pill">成交量<svg width="17" height="14" viewBox="0 0 17 14"><path d="M0 0H17L8.500 14Z" fill="#8a8a8e" /></svg></span>
        <svg width="833" height="61" viewBox="184 0 833 61">
          ${legend.map(([t, x, w, c, ax, up]) => svg`<text x="${x}" y="41.300" font-size="43" fill="${c}" textLength="${w}" lengthAdjust="spacingAndGlyphs">${t}</text>
            <g transform="translate(${ax} 26) scale(1 ${up ? 1 : -1})"><path d="M0 -12V19" stroke="${c}" stroke-width="2.800"/><path d="M-5.500 -10L0 -19L5.500 -10Z" fill="${c}"/></g>`)}
        </svg>
        <span class="fold"><svg width="20" height="34" viewBox="0 0 20 34"><path d="M18 2L3 17L18 32" fill="none" stroke="#fff" stroke-width="5" stroke-linecap="round" stroke-linejoin="round" /></svg></span>
      </div>
      <div class="plot">
        <svg width="1080" height="279" viewBox="0 79 1080 279">
          <rect x="12.500" y="79" width="1054.500" height="228.500" fill="none" stroke="#2b2b2b" stroke-width="1.500" />
          <text x="13" y="135" font-size="46" fill="#868686">30.68万</text>
          ${VOLUME.map(({ kind, top }, i) => {
            const x = FIRST + i * STEP;
            return kind === "r"
              ? svg`<rect x="${n1(x - 4.8)}" y="${n1(top + 1)}" width="10.800" height="${n1(304.8 - top)}" fill="#140707" stroke="#b32828" stroke-width="3.300"/>`
              : svg`<rect x="${n1(x - 5.1)}" y="${n1(top)}" width="11.200" height="${n1(306.3 - top)}" fill="#00ffff"/>`;
          })}
          <g fill="none" stroke-width="3.200" stroke-linejoin="round">
            <polyline points="${line(VMA1, 3)}" stroke="#f5e440" />
            <polyline points="${line(VMA2, 3)}" stroke="#d41fd4" />
            <polyline points="${line(VMA3, 3)}" stroke="#45c84a" />
          </g>
          <rect x="12" y="308" width="1056" height="50" fill="#242426" />
          ${ticks.map((x, k) => {
            const major = x === 378 || x === 738;
            const fade = Math.min(1, (k + 1) / 6, (68 - k) / 3);
            return svg`<path d="M${x} 309v${major ? 16 : 10}" stroke="#a8a8a8" stroke-width="${major ? 3.6 : 2}" opacity="${fade}"/>`;
          })}
          <g font-size="39.500" fill="#aaaaaa">
            <text x="16.500" y="362">20250108</text><text x="290.500" y="362">20250227</text><text x="650" y="362">20250411</text>
          </g>
          <circle cx="1027.300" cy="348" r="30" fill="#0d0d0d" /><path d="M1020 336V361L1035 348.500Z" fill="#b0b0b0" />
        </svg>
      </div>`;
  }
}

@customElement("bottom-bar")
class BottomBar extends LitElement {
  static styles = [base, css`
    .bar { display: flex; height: 153px; background: #1c1c1c; border-top: 1px solid #232323; }
    .index { flex: none; width: 338px; display: flex; flex-direction: column; padding: 10px 0 0 40px; color: #1fc81f; }
    .index > svg { margin-left: 104px; }
    .val { font-size: 50px; line-height: 60px; margin: 9px 0 0 25px; }
    .sub { display: flex; justify-content: space-between; width: 270px; font-size: 46px; line-height: 51px; }
    .sub b { font-weight: 400; color: #88888c; }
    .cta { flex: none; width: 278px; height: 118px; margin-top: 17px; border-radius: 59px; background: linear-gradient(#3175c5, #4b9cfb); color: #fff; font-size: 42.500px; font-weight: 500; line-height: 124px; text-align: center; padding-right: 2px; }
    .acts { display: flex; margin-left: 49px; }
    .act { flex: none; width: 140px; display: flex; flex-direction: column; align-items: center; padding: 11px 7px 0 0; font-size: 46px; line-height: 54px; color: #8a8a8e; }
    .act span { margin-top: 18px; }
    .on { color: #3873bb; width: 136px; padding-right: 6px; }
  `];
  render() {
    return html`<div class="bar">
      <div class="index">
        <svg width="24" height="8" viewBox="0 0 24 8"><path d="M12 0L24 8H0Z" fill="#88888c" /></svg>
        <span class="val">4082.07</span>
        <div class="sub"><b>上证</b><span>-1.26%</span></div>
      </div>
      <span class="cta">开户交易</span>
      <div class="acts">
        <div class="act"><svg width="64" height="64" viewBox="0 0 64 64" fill="none" stroke="currentColor" stroke-width="3.500" stroke-linecap="round"><path d="M44 3.500H12Q3 3.500 3 12V52Q3 60.500 12 60.500H52Q61 60.500 61 52V20" /><path d="M23 41L53 11" stroke-width="6.500" /><path d="M57.500 6.500L59 5" stroke-width="7" /></svg><span>发帖</span></div>
        <div class="act"><svg width="64" height="64" viewBox="0 0 64 64" fill="none" stroke="currentColor" stroke-width="3.500" stroke-linejoin="round"><rect x="4" y="5" width="24" height="24" rx="5" /><rect x="4" y="36" width="24" height="24" rx="5" /><rect x="35" y="36" width="24" height="24" rx="5" /><rect x="37" y="7" width="20" height="20" rx="3" transform="rotate(45 47 17)" /></svg><span>功能</span></div>
        <div class="act on"><svg width="64" height="64" viewBox="0 0 64 64" fill="none" stroke="currentColor" stroke-width="3.500"><circle cx="32" cy="32" r="30" /><path d="M17 32H47M32 17V47" /></svg><span>加自</span></div>
      </div>
    </div>`;
  }
}

@customElement("nav-bar")
class NavBar extends LitElement {
  static styles = [base, css`
    .bar { display: flex; gap: 214px; height: 149px; background: #fff; padding: 61px 0 0 254px; }
  `];
  render() {
    return html`<div class="bar">
      <svg width="44" height="46" viewBox="0 0 44 46"><path d="M37 3.500Q39.500 2 39.500 5V39Q39.500 42 37 40.500L4.500 25Q2 22.500 4.500 20Z" fill="none" stroke="#949494" stroke-width="3" stroke-linejoin="round" /></svg>
      <svg width="44" height="46" viewBox="0 0 44 46"><rect x="2.500" y="3.500" width="38" height="38" rx="8" fill="none" stroke="#949494" stroke-width="3" /></svg>
      <svg width="44" height="46" viewBox="0 0 44 46"><path d="M1 4H42M1 22.500H42M1 41H42" stroke="#949494" stroke-width="3.500" /></svg>
    </div>`;
  }
}

@customElement("app-root")
class AppRoot extends LitElement {
  static styles = [base, css`
    :host { width: 1080px; height: 2400px; overflow: hidden; background: #1c1c1c; font-family: Roboto, "Noto Sans CJK SC", sans-serif; line-height: 1.17; }
    .charts { background: #0d0d0d; height: 1067px; }
  `];
  render() {
    return html`<status-bar></status-bar>
      <stock-header></stock-header>
      <notice-panel></notice-panel>
      <quote-panel></quote-panel>
      <period-tabs></period-tabs>
      <div class="charts"><price-chart></price-chart><volume-chart></volume-chart></div>
      <bottom-bar></bottom-bar>
      <nav-bar></nav-bar>`;
  }
}
